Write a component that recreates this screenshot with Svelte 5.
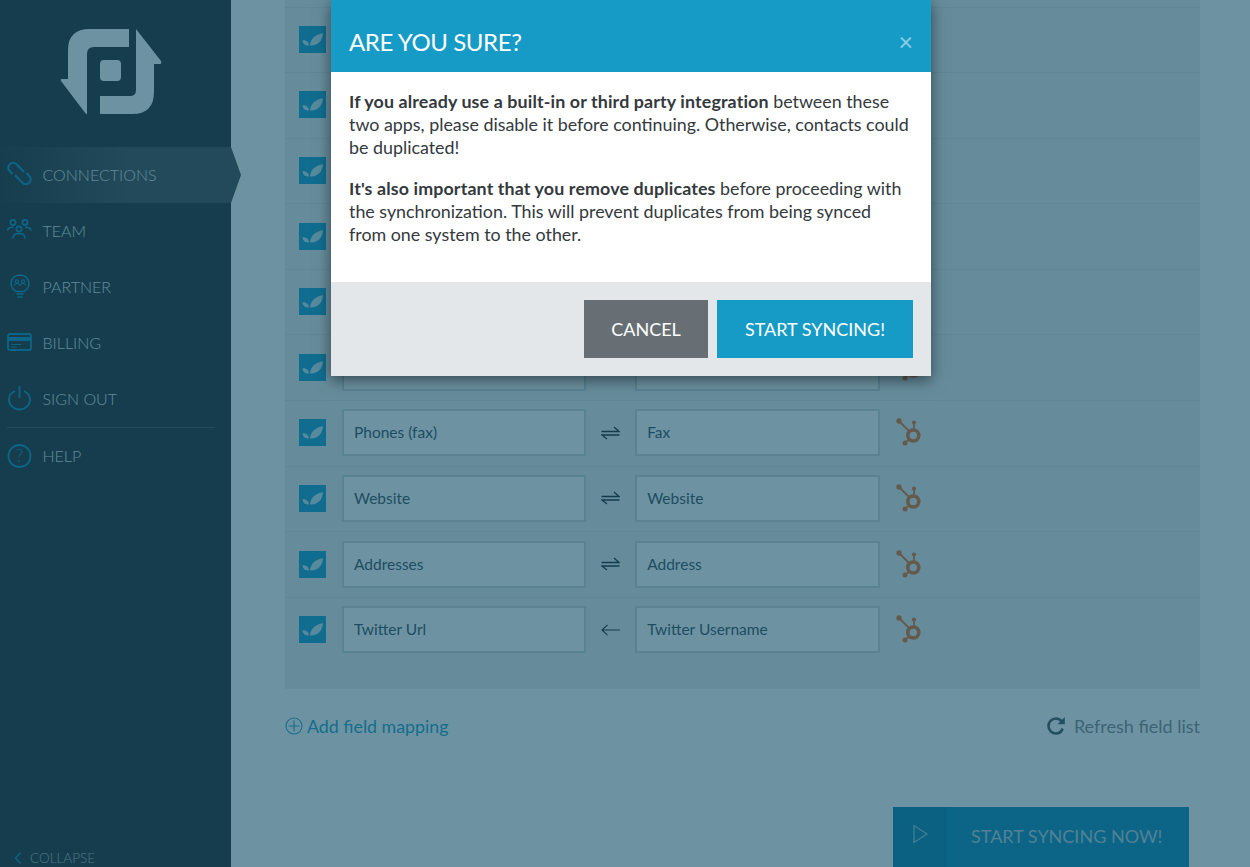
<script lang="ts">
  // the first six rows sit behind the dialog, so they carry no readable text
  const mappings = [
    { left: '', dir: 'both', right: '' },
    { left: '', dir: 'both', right: '' },
    { left: '', dir: 'both', right: '' },
    { left: '', dir: 'both', right: '' },
    { left: '', dir: 'both', right: '' },
    { left: '', dir: 'both', right: '' },
    { left: 'Phones (fax)', dir: 'both', right: 'Fax' },
    { left: 'Website', dir: 'both', right: 'Website' },
    { left: 'Addresses', dir: 'both', right: 'Address' },
    { left: 'Twitter Url', dir: 'left', right: 'Twitter Username' }
  ];
</script>

<div class="page">
  <aside class="sidebar">
    <div class="logo">
      <svg width="102" height="86" viewBox="60 29 102 86" fill="#fff">
        <path d="M129 29V47H94Q87 47 87 54V114H86L61 81Q60 79 62 79H68V50Q68 29 90 29Z" />
        <path d="M136 29L161 61Q162 64 160 64H154V92Q154 114 132 114H100V96H130Q136 96 136 90Z" />
        <rect x="100" y="60" width="21" height="21" rx="4" />
      </svg>
    </div>

    <nav class="nav">
      <a class="nav-item active">
        <svg class="nav-icon" viewBox="0 0 26 26" width="26" height="26" fill="none" stroke="currentColor" stroke-width="2.300">
          <path d="M5.500 13L2.800 10A4.700 4.700 0 0 1 9.500 3.300L17 11" />
          <path d="M19.500 12L22.200 15A4.700 4.700 0 0 1 15.500 21.700L8 14" />
        </svg>
        <span>CONNECTIONS</span>
      </a>
      <a class="nav-item">
        <svg class="nav-icon" viewBox="0 0 26 26" width="26" height="26" fill="none" stroke="currentColor" stroke-width="1.700">
          <circle cx="6" cy="5.500" r="2.600" />
          <circle cx="18" cy="5.500" r="2.600" />
          <circle cx="12" cy="12" r="2.600" />
          <path d="M0.500 13.500C1 10.800 3 10 6.500 10.300M24 13.500C23.500 10.800 21.500 10 18 10.300M6 21.500C6 17.800 8.500 16.500 12 16.500C15.500 16.500 18 17.800 18 21.500" />
        </svg>
        <span>TEAM</span>
      </a>
      <a class="nav-item">
        <svg class="nav-icon" viewBox="0 0 26 26" width="26" height="26" fill="none" stroke="currentColor" stroke-width="1.500">
          <path d="M9.500 18.500C6 17 4 14 4 10.500C4 5.500 8 2 13 2C18 2 22 5.500 22 10.500C22 14 20 17 16.500 18.500Z" />
          <path d="M9.500 21H16.500M10.500 24H15.500" stroke-width="1.600" />
          <circle cx="10" cy="8.500" r="1.600" stroke-width="1.100" />
          <circle cx="16" cy="8.500" r="1.600" stroke-width="1.100" />
          <path d="M7.500 12.500C7.500 11 8.500 10.500 10 10.500C11.500 10.500 12.500 11 12.500 12.500M13.500 12.500C13.500 11 14.500 10.500 16 10.500C17.500 10.500 18.500 11 18.500 12.500" stroke-width="1.100" />
        </svg>
        <span>PARTNER</span>
      </a>
      <a class="nav-item">
        <svg class="nav-icon" viewBox="0 0 26 26" width="26" height="26" fill="none" stroke="currentColor">
          <rect x="1" y="5" width="23" height="16" rx="2" stroke-width="1.800" />
          <rect x="1" y="8" width="23" height="4" fill="currentColor" stroke="none" />
          <path d="M4.500 15.500H14M4.500 18H9.500" stroke-width="1" />
        </svg>
        <span>BILLING</span>
      </a>
      <a class="nav-item">
        <svg class="nav-icon" viewBox="0 0 26 26" width="26" height="26" fill="none" stroke="currentColor" stroke-width="1.800">
          <path d="M8 6C4 7.800 1.900 11 1.900 14.300C1.900 20.300 6.800 24.500 12.500 24.500C18.200 24.500 23 20.300 23 14.300C23 11 21 7.800 17 6" />
          <path d="M12.500 1V13" />
        </svg>
        <span>SIGN OUT</span>
      </a>
      <div class="nav-divider"></div>
      <a class="nav-item help">
        <svg class="nav-icon" viewBox="0 0 26 26" width="26" height="26" fill="none" stroke="currentColor" stroke-width="1.800">
          <circle cx="12.500" cy="13" r="11" />
          <text x="12.500" y="19" text-anchor="middle" class="help-mark">?</text>
        </svg>
        <span>HELP</span>
      </a>
    </nav>

    <div class="collapse">
      <svg width="8" height="12" viewBox="0 0 8 12" fill="none" stroke="currentColor" stroke-width="1.300"><path d="M6.500 0.500L1.500 6L6.500 11.500" /></svg>
      <span>COLLAPSE</span>
    </div>
  </aside>

  <main class="main">
    <section class="panel">
      {#each mappings as m}
        <div class="row">
          <span class="check">
            <svg width="27" height="27" viewBox="0 0 27 27" fill="#fff">
              <path d="M11 19.500C11.500 13 16 8.500 24 7.300C23.500 14.500 19 20 11 19.500Z" />
              <path d="M3.300 14.300C6.500 13.800 9.500 15.500 10 19.300C7 20 4 18.500 3.300 14.300Z" />
            </svg>
          </span>
          <div class="field">{m.left}</div>
          <span class="dir">
            {#if m.dir === 'both'}
              <svg width="19" height="14" viewBox="0 0 19 14" fill="none" stroke="#222d33" stroke-width="1.300">
                <path d="M0.500 5.500H18L13 1M18.500 9H1L6 13" />
              </svg>
            {:else}
              <svg width="19" height="12" viewBox="0 0 19 12" fill="none" stroke="#222d33" stroke-width="1.100">
                <path d="M19 6H1M6.500 0.800L1 6L6.500 11.200" />
              </svg>
            {/if}
          </span>
          <div class="field">{m.right}</div>
          <svg class="hub" width="26" height="29" viewBox="0 0 26 29" fill="none" stroke="#e87530" stroke-width="1.800">
            <circle cx="17.300" cy="17.500" r="5.500" stroke-width="3.600" />
            <path d="M3 3L13 13M18 4.500V11M13 21.500L9 25" />
            <circle cx="3" cy="3" r="2.700" fill="#e87530" stroke="none" />
            <circle cx="18" cy="4.500" r="2.100" fill="#e87530" stroke="none" />
            <circle cx="9" cy="25" r="2.500" fill="#e87530" stroke="none" />
          </svg>
        </div>
      {/each}
    </section>

    <div class="actions">
      <a class="add">
        <svg width="18" height="18" viewBox="0 0 18 18" fill="none" stroke="currentColor" stroke-width="1.100">
          <circle cx="9" cy="9" r="8" />
          <path d="M9 3.500V14.500M3.500 9H14.500" />
        </svg>
        Add field mapping
      </a>
      <a class="refresh">
        <svg width="20" height="20" viewBox="0 0 20 20" fill="none" stroke="#4d5a62" stroke-width="2.600">
          <path d="M16.600 12.500C15.600 15.700 13 17.500 10 17.500C5.800 17.500 2.500 14.200 2.500 10C2.500 5.800 5.800 2.500 10 2.500C12.600 2.500 14.500 3.600 16.200 5.600" />
          <path d="M18.800 1V8.200H11.600Z" fill="#4d5a62" stroke="none" />
        </svg>
        Refresh field list
      </a>
    </div>

    <button class="start-now">
      <span class="play">
        <svg width="15" height="20" viewBox="0 0 15 20" fill="none" stroke="#fff" stroke-width="1.200"><path d="M1 1.500V18.500L14 10Z" /></svg>
      </span>
      <span class="start-label">START SYNCING NOW!</span>
    </button>
  </main>

  <div class="overlay"></div>

  <div class="modal">
    <header class="modal-head">
      <h2>ARE YOU SURE?</h2>
      <span class="close">×</span>
    </header>
    <div class="modal-body">
      <p><b>If you already use a built-in or third party integration</b> between these two apps, please disable it before continuing. Otherwise, contacts could be duplicated!</p>
      <p><b>It's also important that you remove duplicates</b> before proceeding with the synchronization. This will prevent duplicates from being synced from one system to the other.</p>
    </div>
    <footer class="modal-foot">
      <button class="btn cancel">CANCEL</button>
      <button class="btn confirm">START SYNCING!</button>
    </footer>
  </div>
</div>

<style>
  :global(body) { margin: 0; overflow: hidden; background: #fff; }
  .page {
    position: relative; display: flex; height: 867px; overflow: hidden;
    font-family: Lato, "Open Sans", sans-serif; color: #43545e;
  }

  .sidebar { width: 231px; flex: none; background: #2b3032; display: flex; flex-direction: column; position: relative; }
  .logo { height: 147px; box-sizing: border-box; padding: 29px 0 0 60px; }
  .logo svg { display: block; }
  .nav { display: flex; flex-direction: column; }
  .nav-item {
    height: 56px; box-sizing: border-box; padding: 0 0 2px 7px; display: flex; align-items: center; gap: 9.500px;
    color: #dfe3e5; font-size: 16px; font-weight: 300; position: relative;
  }
  .nav-icon { color: #1490bb; flex: none; }
  .help-mark { font-family: Lato, sans-serif; font-size: 17px; fill: currentColor; stroke: none; }
  .nav-item.active { background: linear-gradient(90deg, #2b3032 0%, #494e50 55%); }
  .nav-item.active::after {
    content: ""; position: absolute; left: 100%; top: 0; width: 10px; height: 56px;
    background: #494e50; clip-path: polygon(0 0, 100% 50%, 0 100%);
  }
  .nav-divider { height: 1px; background: #4a5052; margin: 0 16px 0 7px; }
  .nav-item.help { height: 57px; }
  .collapse {
    margin-top: auto; height: 18px; display: flex; align-items: center; gap: 8px; padding-left: 14px;
    font-size: 13.500px; font-weight: 300; color: #b0b6b9;
  }
  .collapse svg { color: #1490bb; }

  .main { flex: 1; min-width: 0; padding: 0 50px 0 54px; display: flex; flex-direction: column; background: #fff; }
  .panel { background: #eee; padding: 6.500px 0 26.500px; }
  .row {
    height: 65.600px; box-sizing: border-box; border-top: 1px solid #dfe1e2; padding: 0 0 1px 14px;
    display: flex; align-items: center;
  }
  .check { width: 27px; height: 27px; background: #1fa4d2; flex: none; margin-right: 16px; }
  .check svg { display: block; opacity: .75; }
  .field {
    width: 244.400px; height: 47px; box-sizing: border-box; background: #fff;
    border: 2px solid #cfd6da; padding-left: 10px; font-size: 15.500px; line-height: 42px; flex: none;
  }
  .dir { width: 48.800px; display: flex; justify-content: center; flex: none; }
  .hub { margin-left: 16px; flex: none; }

  .actions { display: flex; justify-content: space-between; align-items: center; margin-top: 25px; height: 24px; font-size: 18px; }
  .add { color: #2aa3cb; display: flex; align-items: center; gap: 4px; font-size: 17.800px; }
  .refresh { color: #8c8c8f; display: flex; align-items: center; gap: 8px; }

  .start-now {
    align-self: flex-end; margin: 69px 11px 0 0; width: 296px; height: 60px; flex: none; border: none; padding: 0;
    background: #1490bb; color: #d6dfe3; font: 18px Lato, sans-serif; display: flex; align-items: stretch;
  }
  .play { width: 54px; background: #1286ae; display: flex; justify-content: center; padding-top: 17px; box-sizing: border-box; flex: none; }
  .play svg { opacity: .6; }
  .start-label { flex: 1; padding-left: 24px; text-align: left; line-height: 59px; opacity: .85; }

  .overlay { position: absolute; inset: 0; background: rgba(6, 72, 97, .59); }

  .modal {
    position: absolute; left: 331px; top: 0; width: 600px; z-index: 2;
    box-shadow: 0 4px 14px rgba(0, 0, 0, .5);
  }
  .modal-head {
    height: 72px; background: #169bc6; box-sizing: border-box; padding: 23px 18px 0;
    display: flex; justify-content: space-between; color: #fff;
  }
  .modal-head h2 { margin: 0; font-size: 24px; font-weight: 400; line-height: 38px; letter-spacing: -.4px; }
  .close { font-size: 25px; line-height: 37px; opacity: .5; }
  .modal-body { background: #fff; height: 210px; box-sizing: border-box; padding: 18px 20.500px 0 18px; color: #33393d; font-size: 17.850px; line-height: 23px; }
  .modal-body p { margin: 0 0 18px; }
  .modal-body b { font-weight: 700; letter-spacing: .12px; }
  .modal-foot { background: #e3e7ea; height: 94px; box-sizing: border-box; padding: 18px; display: flex; justify-content: flex-end; gap: 9px; }
  .btn { height: 58px; border: none; color: #fff; font: 18px Lato, sans-serif; padding: 0; }
  .cancel { width: 124px; background: #686f74; }
  .confirm { width: 196px; background: #169bc6; }
</style>
